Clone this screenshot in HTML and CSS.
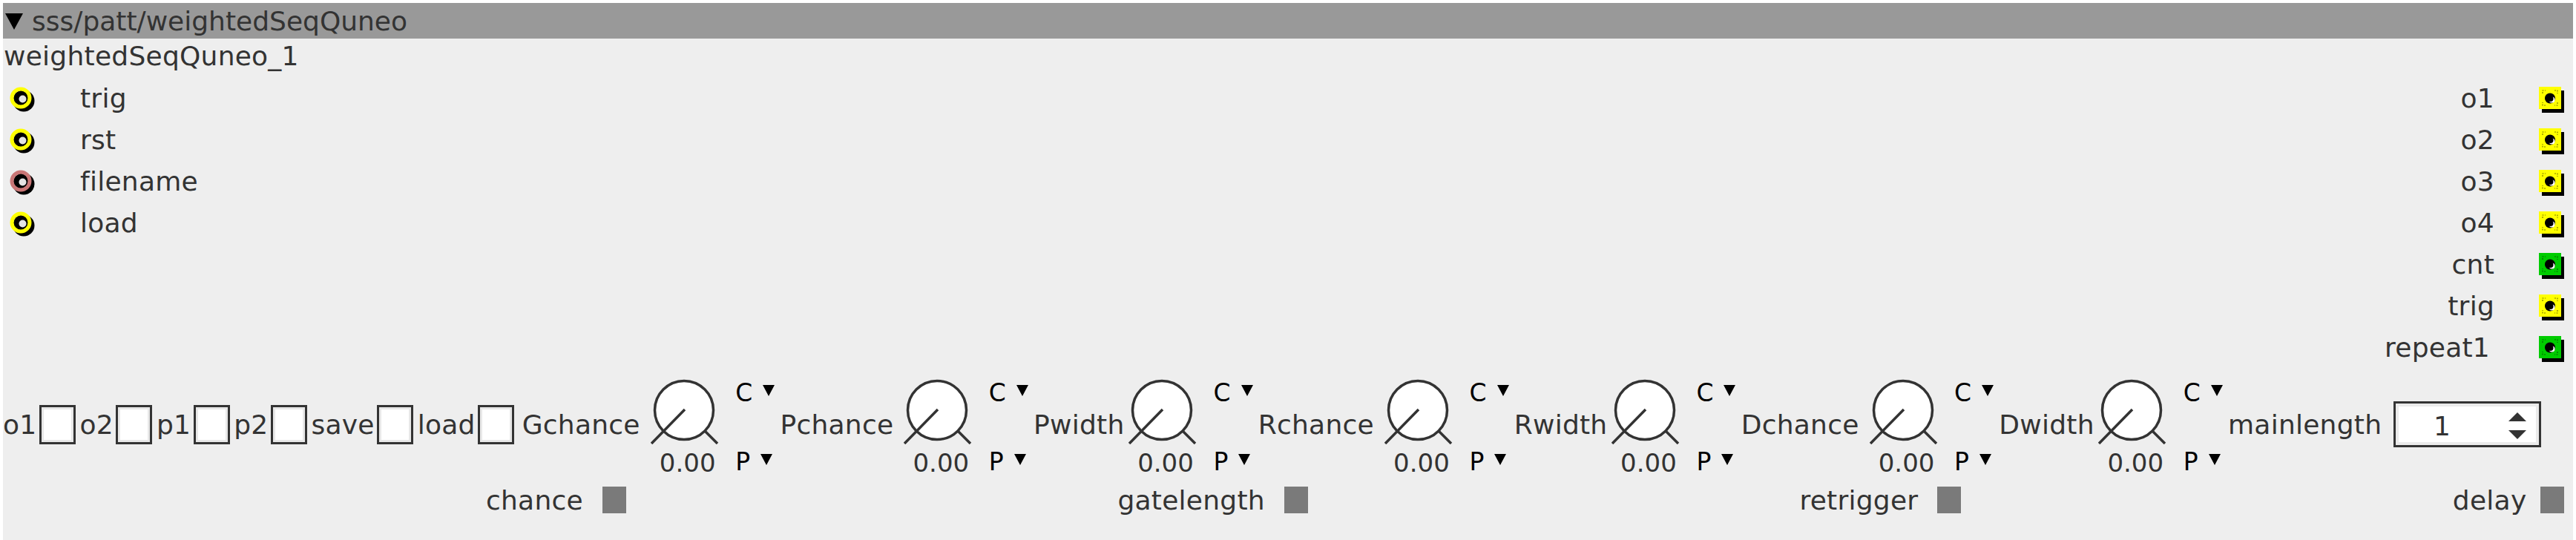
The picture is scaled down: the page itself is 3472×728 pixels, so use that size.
FILE: index.html
```html
<!DOCTYPE html>
<html>
<head>
<meta charset="utf-8">
<link rel="stylesheet" href="styles.css">
</head>
<body>
<div class="obj">
  <div class="hdr">
    <svg class="hdr-tri" width="24" height="22" viewBox="0 0 24 22"><polygon points="0,0 24,0 12,22" fill="#000"/></svg>
    <span class="title">sss/patt/weightedSeqQuneo</span>
  </div>
  <div class="inst">weightedSeqQuneo_1</div>
  <div class="io">
    <div class="inlets">
      <div class="inrow"><svg class="jack" width="40" height="40" viewBox="0 0 40 40"><circle cx="22" cy="24" r="14.5" fill="#000"/><circle cx="18" cy="20" r="9.5" fill="#000"/><circle cx="20.5" cy="21.5" r="5" fill="#e4e4e4"/><circle cx="18" cy="20" r="12" fill="none" stroke="#ffff00" stroke-width="5"/></svg><span class="lbl">trig</span></div>
      <div class="inrow"><svg class="jack" width="40" height="40" viewBox="0 0 40 40"><circle cx="22" cy="24" r="14.5" fill="#000"/><circle cx="18" cy="20" r="9.5" fill="#000"/><circle cx="20.5" cy="21.5" r="5" fill="#e4e4e4"/><circle cx="18" cy="20" r="12" fill="none" stroke="#ffff00" stroke-width="5"/></svg><span class="lbl">rst</span></div>
      <div class="inrow"><svg class="jack" width="40" height="40" viewBox="0 0 40 40"><circle cx="22" cy="24" r="14.5" fill="#000"/><circle cx="18" cy="20" r="9.5" fill="#000"/><circle cx="20.5" cy="21.5" r="5" fill="#e4e4e4"/><circle cx="18" cy="20" r="12" fill="none" stroke="#c97676" stroke-width="5"/></svg><span class="lbl">filename</span></div>
      <div class="inrow"><svg class="jack" width="40" height="40" viewBox="0 0 40 40"><circle cx="22" cy="24" r="14.5" fill="#000"/><circle cx="18" cy="20" r="9.5" fill="#000"/><circle cx="20.5" cy="21.5" r="5" fill="#e4e4e4"/><circle cx="18" cy="20" r="12" fill="none" stroke="#ffff00" stroke-width="5"/></svg><span class="lbl">load</span></div>
    </div>
    <div class="outlets">
      <div class="outrow"><span class="lbl">o1</span><svg class="port" width="36" height="38" viewBox="0 0 36 38"><rect x="4" y="5" width="30" height="30" fill="#000"/><rect x="0" y="0" width="30" height="30" fill="#ffff00"/><path d="M5 9V5H9M21 5H25V9M25 21V25H21M9 25H5V21" fill="none" stroke="#7a7a00" stroke-width="1.2" stroke-dasharray="2 1.5"/><circle cx="15" cy="15.5" r="7" fill="#000"/><circle cx="17.5" cy="17.5" r="4" fill="#fff"/><circle cx="15.5" cy="16" r="4" fill="#000"/></svg></div>
      <div class="outrow"><span class="lbl">o2</span><svg class="port" width="36" height="38" viewBox="0 0 36 38"><rect x="4" y="5" width="30" height="30" fill="#000"/><rect x="0" y="0" width="30" height="30" fill="#ffff00"/><path d="M5 9V5H9M21 5H25V9M25 21V25H21M9 25H5V21" fill="none" stroke="#7a7a00" stroke-width="1.2" stroke-dasharray="2 1.5"/><circle cx="15" cy="15.5" r="7" fill="#000"/><circle cx="17.5" cy="17.5" r="4" fill="#fff"/><circle cx="15.5" cy="16" r="4" fill="#000"/></svg></div>
      <div class="outrow"><span class="lbl">o3</span><svg class="port" width="36" height="38" viewBox="0 0 36 38"><rect x="4" y="5" width="30" height="30" fill="#000"/><rect x="0" y="0" width="30" height="30" fill="#ffff00"/><path d="M5 9V5H9M21 5H25V9M25 21V25H21M9 25H5V21" fill="none" stroke="#7a7a00" stroke-width="1.2" stroke-dasharray="2 1.5"/><circle cx="15" cy="15.5" r="7" fill="#000"/><circle cx="17.5" cy="17.5" r="4" fill="#fff"/><circle cx="15.5" cy="16" r="4" fill="#000"/></svg></div>
      <div class="outrow"><span class="lbl">o4</span><svg class="port" width="36" height="38" viewBox="0 0 36 38"><rect x="4" y="5" width="30" height="30" fill="#000"/><rect x="0" y="0" width="30" height="30" fill="#ffff00"/><path d="M5 9V5H9M21 5H25V9M25 21V25H21M9 25H5V21" fill="none" stroke="#7a7a00" stroke-width="1.2" stroke-dasharray="2 1.5"/><circle cx="15" cy="15.5" r="7" fill="#000"/><circle cx="17.5" cy="17.5" r="4" fill="#fff"/><circle cx="15.5" cy="16" r="4" fill="#000"/></svg></div>
      <div class="outrow"><span class="lbl">cnt</span><svg class="port" width="36" height="38" viewBox="0 0 36 38"><rect x="4" y="5" width="30" height="30" fill="#000"/><rect x="0" y="0" width="30" height="30" fill="#00cc00"/><path d="M5 9V5H9M21 5H25V9M25 21V25H21M9 25H5V21" fill="none" stroke="#006600" stroke-width="1.2" stroke-dasharray="2 1.5"/><circle cx="15" cy="15.5" r="7" fill="#000"/><circle cx="17.5" cy="17.5" r="4" fill="#fff"/><circle cx="15.5" cy="16" r="4" fill="#000"/></svg></div>
      <div class="outrow"><span class="lbl">trig</span><svg class="port" width="36" height="38" viewBox="0 0 36 38"><rect x="4" y="5" width="30" height="30" fill="#000"/><rect x="0" y="0" width="30" height="30" fill="#ffff00"/><path d="M5 9V5H9M21 5H25V9M25 21V25H21M9 25H5V21" fill="none" stroke="#7a7a00" stroke-width="1.2" stroke-dasharray="2 1.5"/><circle cx="15" cy="15.5" r="7" fill="#000"/><circle cx="17.5" cy="17.5" r="4" fill="#fff"/><circle cx="15.5" cy="16" r="4" fill="#000"/></svg></div>
      <div class="outrow"><span class="lbl lbl-r1">repeat1</span><svg class="port" width="36" height="38" viewBox="0 0 36 38"><rect x="4" y="5" width="30" height="30" fill="#000"/><rect x="0" y="0" width="30" height="30" fill="#00cc00"/><path d="M5 9V5H9M21 5H25V9M25 21V25H21M9 25H5V21" fill="none" stroke="#006600" stroke-width="1.2" stroke-dasharray="2 1.5"/><circle cx="15" cy="15.5" r="7" fill="#000"/><circle cx="17.5" cy="17.5" r="4" fill="#fff"/><circle cx="15.5" cy="16" r="4" fill="#000"/></svg></div>
    </div>
  </div>

  <div class="params">
    <span class="lbl">o1</span><span class="cb"></span>
    <span class="lbl">o2</span><span class="cb"></span>
    <span class="lbl">p1</span><span class="cb"></span>
    <span class="lbl">p2</span><span class="cb"></span>
    <span class="lbl">save</span><span class="cb"></span>
    <span class="lbl">load</span><span class="cb"></span>

    <span class="lbl plbl-first">Gchance</span>
    <div class="knob"><svg width="92" height="88" viewBox="0 0 92 88"><circle cx="45" cy="42" r="39.5" fill="#fff" stroke="#333" stroke-width="3.5"/><path d="M46 41L1 87M73 70L90 87" stroke="#333" stroke-width="3.5" fill="none"/></svg><span class="val">0.00</span></div>
    <div class="cp"><span class="cpl">C<svg class="dd" width="16" height="15" viewBox="0 0 16 15"><polygon points="0,0 16,0 8,15" fill="#000"/></svg></span><span class="cpl">P<svg class="dd" width="16" height="15" viewBox="0 0 16 15"><polygon points="0,0 16,0 8,15" fill="#000"/></svg></span></div>

    <span class="lbl">Pchance</span>
    <div class="knob"><svg width="92" height="88" viewBox="0 0 92 88"><circle cx="45" cy="42" r="39.5" fill="#fff" stroke="#333" stroke-width="3.5"/><path d="M46 41L1 87M73 70L90 87" stroke="#333" stroke-width="3.5" fill="none"/></svg><span class="val">0.00</span></div>
    <div class="cp"><span class="cpl">C<svg class="dd" width="16" height="15" viewBox="0 0 16 15"><polygon points="0,0 16,0 8,15" fill="#000"/></svg></span><span class="cpl">P<svg class="dd" width="16" height="15" viewBox="0 0 16 15"><polygon points="0,0 16,0 8,15" fill="#000"/></svg></span></div>

    <span class="lbl">Pwidth</span>
    <div class="knob narrow"><svg width="92" height="88" viewBox="0 0 92 88"><circle cx="45" cy="42" r="39.5" fill="#fff" stroke="#333" stroke-width="3.5"/><path d="M46 41L1 87M73 70L90 87" stroke="#333" stroke-width="3.5" fill="none"/></svg><span class="val">0.00</span></div>
    <div class="cp"><span class="cpl">C<svg class="dd" width="16" height="15" viewBox="0 0 16 15"><polygon points="0,0 16,0 8,15" fill="#000"/></svg></span><span class="cpl">P<svg class="dd" width="16" height="15" viewBox="0 0 16 15"><polygon points="0,0 16,0 8,15" fill="#000"/></svg></span></div>

    <span class="lbl">Rchance</span>
    <div class="knob"><svg width="92" height="88" viewBox="0 0 92 88"><circle cx="45" cy="42" r="39.5" fill="#fff" stroke="#333" stroke-width="3.5"/><path d="M46 41L1 87M73 70L90 87" stroke="#333" stroke-width="3.5" fill="none"/></svg><span class="val">0.00</span></div>
    <div class="cp"><span class="cpl">C<svg class="dd" width="16" height="15" viewBox="0 0 16 15"><polygon points="0,0 16,0 8,15" fill="#000"/></svg></span><span class="cpl">P<svg class="dd" width="16" height="15" viewBox="0 0 16 15"><polygon points="0,0 16,0 8,15" fill="#000"/></svg></span></div>

    <span class="lbl">Rwidth</span>
    <div class="knob narrow"><svg width="92" height="88" viewBox="0 0 92 88"><circle cx="45" cy="42" r="39.5" fill="#fff" stroke="#333" stroke-width="3.5"/><path d="M46 41L1 87M73 70L90 87" stroke="#333" stroke-width="3.5" fill="none"/></svg><span class="val">0.00</span></div>
    <div class="cp"><span class="cpl">C<svg class="dd" width="16" height="15" viewBox="0 0 16 15"><polygon points="0,0 16,0 8,15" fill="#000"/></svg></span><span class="cpl">P<svg class="dd" width="16" height="15" viewBox="0 0 16 15"><polygon points="0,0 16,0 8,15" fill="#000"/></svg></span></div>

    <span class="lbl">Dchance</span>
    <div class="knob"><svg width="92" height="88" viewBox="0 0 92 88"><circle cx="45" cy="42" r="39.5" fill="#fff" stroke="#333" stroke-width="3.5"/><path d="M46 41L1 87M73 70L90 87" stroke="#333" stroke-width="3.5" fill="none"/></svg><span class="val">0.00</span></div>
    <div class="cp"><span class="cpl">C<svg class="dd" width="16" height="15" viewBox="0 0 16 15"><polygon points="0,0 16,0 8,15" fill="#000"/></svg></span><span class="cpl">P<svg class="dd" width="16" height="15" viewBox="0 0 16 15"><polygon points="0,0 16,0 8,15" fill="#000"/></svg></span></div>

    <span class="lbl">Dwidth</span>
    <div class="knob narrow"><svg width="92" height="88" viewBox="0 0 92 88"><circle cx="45" cy="42" r="39.5" fill="#fff" stroke="#333" stroke-width="3.5"/><path d="M46 41L1 87M73 70L90 87" stroke="#333" stroke-width="3.5" fill="none"/></svg><span class="val">0.00</span></div>
    <div class="cp"><span class="cpl">C<svg class="dd" width="16" height="15" viewBox="0 0 16 15"><polygon points="0,0 16,0 8,15" fill="#000"/></svg></span><span class="cpl">P<svg class="dd" width="16" height="15" viewBox="0 0 16 15"><polygon points="0,0 16,0 8,15" fill="#000"/></svg></span></div>

    <span class="lbl">mainlength</span>
    <div class="num"><span class="numv">1</span><svg class="spin" width="24" height="36" viewBox="0 0 24 36"><polygon points="0,12 12,0 24,12" fill="#333"/><polygon points="0,24 24,24 12,36" fill="#333"/></svg></div>
  </div>

  <div class="disps">
    <div class="disp"><span class="lbl">chance</span><span class="led"></span></div>
    <div class="disp"><span class="lbl">gatelength</span><span class="led"></span></div>
    <div class="disp"><span class="lbl">retrigger</span><span class="led"></span></div>
    <div class="disp"><span class="lbl">delay</span><span class="led led-tight"></span></div>
  </div>
</div>
</body>
</html>
```

FILE: styles.css
```css
html, body {
  margin: 0;
  padding: 0;
  background: #ffffff;
}

body {
  font-family: "DejaVu Sans", "Noto Sans", sans-serif;
  color: #333333;
}

.obj {
  margin: 4px 0 0 4px;
  width: 3464px;
  height: 724px;
  background: #eeeeee;
  display: flex;
  flex-direction: column;
  overflow: hidden;
}

.lbl {
  font-size: 36px;
  letter-spacing: 0.25px;
  color: #333333;
  white-space: nowrap;
}

/* header */
.hdr {
  height: 48px;
  flex: none;
  background: #999999;
  display: flex;
  align-items: center;
  padding-left: 3px;
}

.hdr-tri {
  flex: none;
  margin-top: 2px;
}

.title {
  margin-left: 12px;
  font-size: 36px;
  color: #333333;
  white-space: nowrap;
}

.inst {
  height: 52px;
  flex: none;
  line-height: 48px;
  padding-left: 1px;
  font-size: 36px;
  letter-spacing: 0.25px;
}

/* inlets and outlets */
.io {
  display: flex;
  justify-content: space-between;
  flex: none;
  height: 392px;
}

.inlets, .outlets {
  display: flex;
  flex-direction: column;
}

.inrow, .outrow {
  height: 56px;
  display: flex;
  align-items: center;
}

.jack {
  margin-left: 6px;
  margin-right: 58px;
  flex: none;
}

.outrow {
  justify-content: flex-end;
}

.port {
  margin-left: 60px;
  margin-right: 10px;
  margin-top: 8px;
  flex: none;
}

.lbl-r1 {
  margin-right: 6px;
}

/* parameter row */
.params {
  flex: none;
  height: 122px;
  margin-top: 15px;
  display: flex;
  align-items: center;
}

.cb {
  flex: none;
  width: 49px;
  height: 53px;
  box-sizing: border-box;
  border: 3px solid #333333;
  background: #ffffff;
  box-shadow: inset 0 0 0 3px #e8e8e8;
  margin: 0 5.5px 0 3.5px;
}

.plbl-first {
  margin-left: 5px;
}

.knob {
  flex: none;
  align-self: flex-start;
  width: 92px;
  height: 132px;
  display: flex;
  flex-direction: column;
  align-items: center;
  margin-left: 14px;
}

.knob.narrow {
  margin-left: 5.5px;
}

.knob svg {
  display: block;
  flex: none;
}

.val {
  margin-top: 6px;
  font-size: 34px;
  line-height: 38px;
  color: #333333;
  padding-left: 8px;
}

.cp {
  flex: none;
  align-self: flex-start;
  height: 132px;
  display: flex;
  flex-direction: column;
  justify-content: space-between;
  margin-left: 22.5px;
  margin-right: 7.2px;
}

.cpl {
  display: flex;
  align-items: center;
  font-size: 33px;
  line-height: 36px;
  color: #000000;
  height: 36px;
}

.cpl:first-child {
  margin-top: 1px;
}

.cpl:last-child {
  margin-bottom: 2px;
}

.dd {
  margin-left: 14px;
  margin-top: -8px;
}

.num {
  flex: none;
  width: 199px;
  height: 62px;
  box-sizing: border-box;
  border: 3px solid #333333;
  box-shadow: inset 0 0 0 4px #ebebeb;
  background: #ffffff;
  margin-left: 15.75px;
  display: flex;
  align-items: center;
}

.numv {
  font-size: 36px;
  color: #333333;
  margin-left: 51px;
  margin-top: 4px;
}

.spin {
  margin-left: auto;
  margin-right: 17px;
  margin-top: 4px;
}

/* display row */
.disps {
  flex: none;
  height: 62px;
  margin-top: 10px;
  display: flex;
  align-items: center;
  justify-content: space-between;
  padding-left: 651px;
  padding-right: 12px;
}

.disp {
  display: flex;
  align-items: center;
}

.led {
  flex: none;
  width: 32px;
  height: 36px;
  background: #7a7a7a;
  margin-left: 26px;
}

.led-tight {
  margin-left: 18.5px;
}
```
